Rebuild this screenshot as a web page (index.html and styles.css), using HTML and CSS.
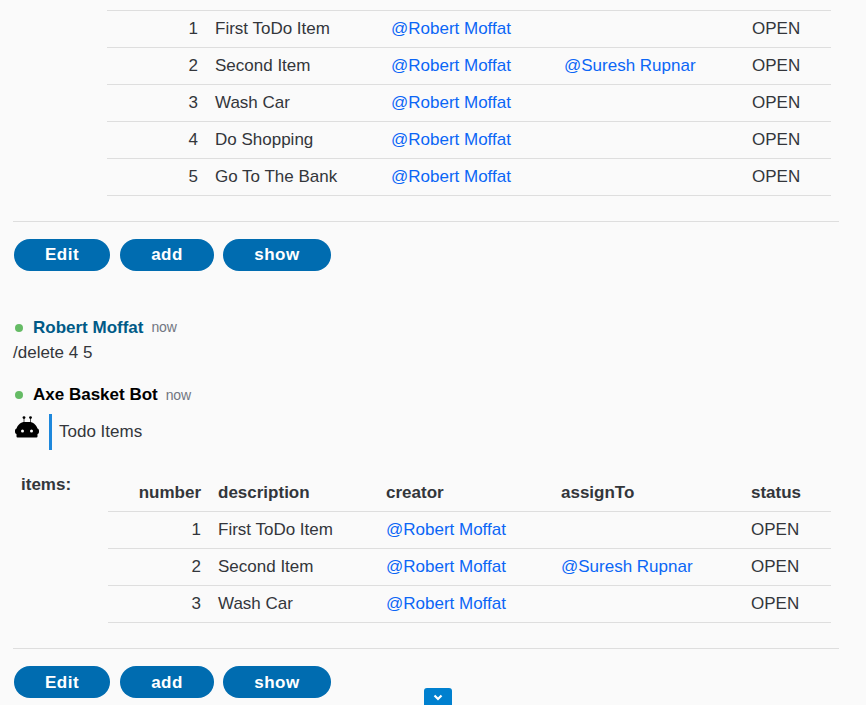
FILE: index.html
```html
<!DOCTYPE html>
<html lang="en">
<head>
<meta charset="utf-8">
<title>Todo Items</title>
<link rel="stylesheet" href="styles.css">
</head>
<body>
<main class="chat">
  <section class="result">
    <table class="items items-first">
      <colgroup><col class="c1"><col class="c2"><col class="c3"><col class="c4"><col class="c5"></colgroup>
      <tbody>
      <tr><td class="num">1</td><td>First ToDo Item</td><td><a>@Robert Moffat</a></td><td></td><td>OPEN</td></tr>
      <tr><td class="num">2</td><td>Second Item</td><td><a>@Robert Moffat</a></td><td><a>@Suresh Rupnar</a></td><td>OPEN</td></tr>
      <tr><td class="num">3</td><td>Wash Car</td><td><a>@Robert Moffat</a></td><td></td><td>OPEN</td></tr>
      <tr><td class="num">4</td><td>Do Shopping</td><td><a>@Robert Moffat</a></td><td></td><td>OPEN</td></tr>
      <tr><td class="num">5</td><td>Go To The Bank</td><td><a>@Robert Moffat</a></td><td></td><td>OPEN</td></tr>
      </tbody>
    </table>
    <div class="actions">
      <button class="edit">Edit</button><button class="add">add</button><button class="show">show</button>
    </div>
  </section>

  <section class="message user">
    <header><span class="dot"></span><strong class="name">Robert Moffat</strong><time>now</time></header>
    <p>/delete 4 5</p>
  </section>

  <section class="message bot">
    <header><span class="dot"></span><strong class="name">Axe Basket Bot</strong><time>now</time></header>
    <div class="card">
      <svg class="robot" width="24" height="22" viewBox="0 0 24 22">
        <path d="M9 2v5M15.500 2v5" stroke="#555" stroke-width="1"/>
        <circle cx="9" cy="1.600" r="1.400"/><circle cx="15.500" cy="1.600" r="1.400"/>
        <path d="M1.500 12.500C3 8.500 6 6 9.500 6h5c3.500 0 6.500 2.500 8 6.500 1.500.5 1.500 1.500 1.500 3s-.5 2.500-1.500 2.500v2.500q0 1-1 1h-19q-1 0-1-1V18C.5 18 0 17 0 15.500s0-2.500 1.500-3z"/>
        <circle cx="7.500" cy="15" r="1.500" fill="#fff"/><circle cx="16.500" cy="15" r="1.500" fill="#fff"/>
      </svg>
      <div class="bar"></div>
      <span class="title">Todo Items</span>
    </div>
  </section>

  <section class="result">
    <div class="field">
      <strong class="label">items:</strong>
      <table class="items items-second">
        <colgroup><col class="c1"><col class="c2"><col class="c3"><col class="c4"><col class="c5"></colgroup>
        <thead><tr><th class="num">number</th><th>description</th><th>creator</th><th>assignTo</th><th>status</th></tr></thead>
        <tbody>
        <tr><td class="num">1</td><td>First ToDo Item</td><td><a>@Robert Moffat</a></td><td></td><td>OPEN</td></tr>
        <tr><td class="num">2</td><td>Second Item</td><td><a>@Robert Moffat</a></td><td><a>@Suresh Rupnar</a></td><td>OPEN</td></tr>
        <tr><td class="num">3</td><td>Wash Car</td><td><a>@Robert Moffat</a></td><td></td><td>OPEN</td></tr>
        </tbody>
      </table>
    </div>
    <div class="actions">
      <button class="edit">Edit</button><button class="add">add</button><button class="show">show</button>
    </div>
  </section>
  <div class="jump"><svg width="10" height="7" viewBox="0 0 10 7"><path d="M1.500 1.500L5 5l3.500-3.500" fill="none" stroke="#fff" stroke-width="2.200"/></svg></div>
</main>
</body>
</html>
```
FILE: styles.css
```css
* { box-sizing: border-box; }
body {
  margin: 0;
  background: #fafafa;
  color: #33363b;
  font: 17px/24px "Liberation Sans", Arial, sans-serif;
}
.chat { position: relative; height: 705px; overflow: hidden; padding: 10px 27px 0 13px; }

.items { table-layout: fixed; border-collapse: separate; border-spacing: 0; border-top: 1px solid transparent; }
.items td, .items th { height: 37px; padding: 0 8px; border-bottom: 1px solid #dedede; text-align: left; line-height: 24px; vertical-align: middle; white-space: nowrap; }
.items .num { text-align: right; padding-right: 9px; }
.items a { color: #0b66f6; }
.items-first { width: 724px; margin-left: 94px; border-top-color: #dedede; }
.items-first .c1 { width: 100px; }
.items-first .c2 { width: 176px; }
.items-first .c3 { width: 173px; }
.items-first .c4 { width: 188px; }
.items-first .c5 { width: 87px; }
.items-second { width: 723px; }
.items-second .c1 { width: 102px; }
.items-second .c2 { width: 168px; }
.items-second .c3 { width: 175px; }
.items-second .c4 { width: 190px; }
.items-second .c5 { width: 88px; }

.actions { display: flex; margin-top: 25px; padding: 17px 1px 0; border-top: 1px solid #dedede; }
button { height: 32px; padding: 0; border: 0; border-radius: 16px; background: #006cb0; color: #fff; font: bold 17px/32px "Liberation Sans", Arial, sans-serif; letter-spacing: 0.5px; }
.edit { width: 96px; margin-right: 10px; }
.add { width: 94px; margin-right: 9px; }
.show { width: 108px; }
.field + .actions button { padding-top: 1px; }

.message header { display: flex; align-items: center; height: 24px; }
.dot { width: 8px; height: 8px; margin: 0 10px 0 2px; border-radius: 50%; background: #65bb65; }
.name { color: #000; }
.user .name { color: #005a87; }
time { margin-left: 8px; font-size: 14px; letter-spacing: -0.2px; color: #717681; }
.user time { margin-bottom: 2px; }
.user { margin-top: 45px; }
.user p { margin: 1px 0 0; }
.bot { margin-top: 18px; }
.card { display: flex; margin-top: 7px; height: 36px; }
.robot { margin: 2px 0 0 2px; }
.bar { width: 3px; margin-left: 10px; background: #1e88dc; }
.title { margin: 6px 0 0 7px; }

.field { display: flex; margin-top: 24px; }
.label { width: 95px; padding-left: 8px; line-height: 21px; }

.jump { position: absolute; left: 424px; top: 688px; width: 28px; height: 19px; border-radius: 3px 3px 0 0; background: #0080cf; display: flex; justify-content: center; align-items: center; }
```
